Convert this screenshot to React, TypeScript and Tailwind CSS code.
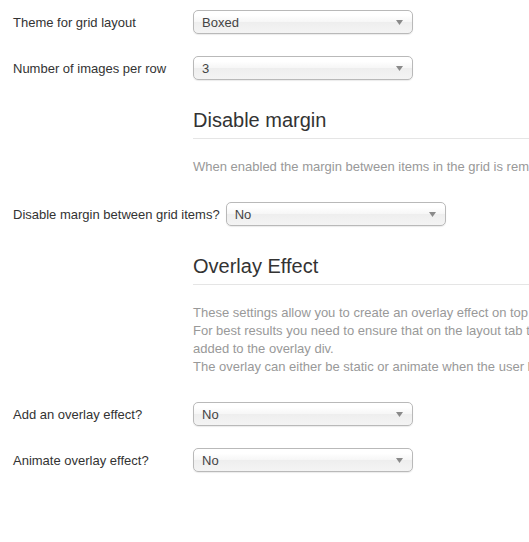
import React from 'react';

const font = { fontFamily: '"Liberation Sans", Arial, sans-serif' };

const Select = ({ value }: { value: string }) => (
  <div className="relative w-[220px] h-[24px] rounded-[5px] border border-[#b9b9b9] bg-[linear-gradient(#ffffff_20%,#f6f6f6_50%,#eeeeee_52%,#f4f4f4_100%)] shadow-[0_1px_1px_rgba(0,0,0,0.08)] flex items-center pl-[8px] pt-[2px] text-[13px] text-[#444]">
    <span>{value}</span>
    <svg className="absolute right-[9px] top-[9px]" width="7" height="5" viewBox="0 0 7 5">
      <path d="M0 0 L7 0 L3.5 5 Z" fill="#8a8a8a" />
    </svg>
  </div>
);

const Row = ({ label, value, wide, className }: { label: string; value: string; wide?: boolean; className?: string }) => (
  <div className={`flex items-center h-[24px] ${className ?? ''}`}>
    <label className={`${wide ? 'pr-[6px]' : 'w-[180px] shrink-0'} pt-[2px] text-[13px] text-[#333] whitespace-nowrap`}>{label}</label>
    <Select value={value} />
  </div>
);

const Spacer = ({ title, lines }: { title: string; lines: string[] }) => (
  <div className="ml-[180px] mt-[28px]">
    <h4 className="text-[20px] leading-[24px] font-normal text-[#333] whitespace-nowrap">{title}</h4>
    <hr className="mt-[6px] border-0 border-t border-[#e5e5e5]" />
    <div className="mt-[19px] text-[13px] leading-[18px] text-[#999]">
      {lines.map((l, i) => (
        <div key={i} className="whitespace-nowrap">{l}</div>
      ))}
    </div>
  </div>
);

export default function App() {
  return (
    <div className="w-full h-[542px] overflow-hidden bg-white" style={font}>
      <div className="pt-[10px] pl-[13px]">
        <Row label="Theme for grid layout" value="Boxed" />
        <Row label="Number of images per row" value="3" className="mt-[22px]" />
        <Spacer
          title="Disable margin"
          lines={['When enabled the margin between items in the grid is removed so the images sit flush together.']}
        />
        <Row label="Disable margin between grid items?" value="No" wide className="mt-[26px]" />
        <Spacer
          title="Overlay Effect"
          lines={[
            'These settings allow you to create an overlay effect on top of the images in the grid.',
            'For best results you need to ensure that on the layout tab the image element has a class',
            'added to the overlay div.',
            'The overlay can either be static or animate when the user hovers over an image.',
          ]}
        />
        <Row label="Add an overlay effect?" value="No" className="mt-[26px]" />
        <Row label="Animate overlay effect?" value="No" className="mt-[22px]" />
      </div>
    </div>
  );
}
